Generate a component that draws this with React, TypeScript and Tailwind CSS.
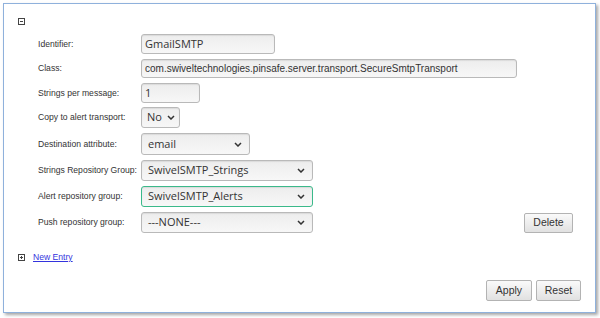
import React from "react";

const label = "w-[103px] shrink-0 text-[8.6px] text-[#333] font-['Liberation_Sans',Arial,sans-serif]";
const field =
  "flex items-center border border-[#b9b9b9] rounded-[3px] bg-gradient-to-b from-[#ededed] to-[#f7f7f7] shadow-[inset_0_1px_1px_rgba(0,0,0,0.08)] px-[3px] text-[11px] text-[#333] font-['Open_Sans',sans-serif]";
const btn =
  "h-[20px] px-[6px] border border-[#b3b3b3] rounded-[2px] bg-gradient-to-b from-[#fafafa] to-[#e1e1e1] text-[10.5px] text-[#333] font-['Liberation_Sans',Arial,sans-serif] leading-none";

function Chevron() {
  return (
    <svg width="8" height="5" viewBox="0 0 8 5" className="shrink-0">
      <path d="M1 1 L4 4 L7 1" fill="none" stroke="#333" strokeWidth="1.5" />
    </svg>
  );
}

function Select({
  value,
  width,
  focus,
  pad = "pl-[6px] pr-[7px]",
}: {
  value: string;
  width: string;
  focus?: boolean;
  pad?: string;
}) {
  return (
    <div
      className={`${field} ${width} ${pad} h-[21px] justify-between ${
        focus ? "!border-[#3bb98a] !border-[1.5px]" : ""
      }`}
    >
      <span>{value}</span>
      <Chevron />
    </div>
  );
}

function BoxIcon({ plus }: { plus?: boolean }) {
  return (
    <svg width="7" height="7" viewBox="0 0 7 7" className="shrink-0">
      <rect x="0.5" y="0.5" width="6" height="6" fill="white" stroke="#444" />
      <path d="M2 3.5 H5" stroke="#444" />
      {plus && <path d="M3.5 2 V5" stroke="#444" />}
    </svg>
  );
}

export default function App() {
  return (
    <div className="w-[600px] h-[318px] bg-white pt-[3px] pl-[3px] overflow-hidden">
      <div className="w-[593px] h-[310px] border border-[#8fb1dc] shadow-[2px_2px_3px_rgba(0,0,0,0.35)] flex flex-col pt-[14px]">
        <div className="pl-[14px] h-[7px] flex">
          <BoxIcon />
        </div>

        <div className="pl-[34px] flex flex-col">
          <div className="flex items-center mt-[9px] h-[20px]">
            <div className={label}>Identifier:</div>
            <div className={`${field} w-[134px] h-[20px]`}>GmailSMTP</div>
          </div>
          <div className="flex items-center mt-[5px] h-[19px]">
            <div className={label}>Class:</div>
            <div className={`${field} w-[376px] h-[19px] !text-[10px] !font-['Liberation_Sans',Arial,sans-serif]`}>
              com.swiveltechnologies.pinsafe.server.transport.SecureSmtpTransport
            </div>
          </div>
          <div className="flex items-center mt-[5px] h-[20px]">
            <div className={label}>Strings per message:</div>
            <div className={`${field} w-[59px] h-[20px]`}>1</div>
          </div>
          <div className="flex items-center mt-[4px] h-[21px]">
            <div className={label}>Copy to alert transport:</div>
            <Select value="No" width="w-[39px]" pad="pl-[5px] pr-[4px]" />
          </div>
          <div className="flex items-center mt-[5px] h-[22px]">
            <div className={label}>Destination attribute:</div>
            <Select value="email" width="w-[109px] !h-[22px]" />
          </div>
          <div className="flex items-center mt-[5px] h-[21px]">
            <div className={label}>Strings Repository Group:</div>
            <Select value="SwivelSMTP_Strings" width="w-[172px]" />
          </div>
          <div className="flex items-center mt-[5px] h-[21px]">
            <div className={label}>Alert repository group:</div>
            <Select value="SwivelSMTP_Alerts" width="w-[172px]" focus />
          </div>
          <div className="flex items-center mt-[5px] h-[21px] pr-[22px]">
            <div className={label}>Push repository group:</div>
            <Select value="---NONE---" width="w-[172px]" />
            <button className={`${btn} ml-auto w-[49px]`}>Delete</button>
          </div>
        </div>

        <div className="flex items-center gap-[8px] pl-[14px] mt-[18px] h-[12px]">
          <BoxIcon plus />
          <a className="text-[8.6px] text-[#3333dd] underline font-['Liberation_Sans',Arial,sans-serif]">New Entry</a>
        </div>

        <div className="flex justify-end gap-[4px] pr-[14px] mt-[17px]">
          <button className={`${btn} w-[46px] h-[21px]`}>Apply</button>
          <button className={`${btn} w-[45px] h-[21px]`}>Reset</button>
        </div>
      </div>
    </div>
  );
}
